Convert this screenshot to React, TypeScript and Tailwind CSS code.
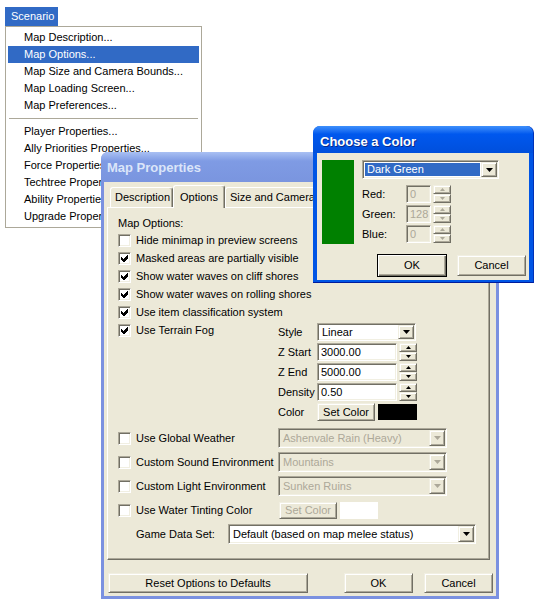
import React from "react";

// classic XP edge styles
const raised =
  "bg-[#ece9d8] border border-t-[#f1efe2] border-l-[#f1efe2] border-r-[#716f64] border-b-[#716f64] shadow-[inset_1px_1px_0_#fff,inset_-1px_-1px_0_#aca899]";
const sunken =
  "border border-t-[#aca899] border-l-[#aca899] border-r-white border-b-white shadow-[inset_1px_1px_0_#716f64,inset_-1px_-1px_0_#f1efe2]";

function Check({ on }: { on?: boolean }) {
  return (
    <span className={`flex h-[13px] w-[13px] shrink-0 items-center justify-center bg-white ${sunken}`}>
      {on && (
        <svg width="7" height="7" viewBox="0 0 7 7" shapeRendering="crispEdges">
          <polygon points="0,2 2,4 6,0 7,0 7,3 3,7 2,7 0,5" fill="#000" />
        </svg>
      )}
    </span>
  );
}

function CheckRow({ label, on }: { label: string; on?: boolean }) {
  return (
    <div className="flex h-[18px] items-center gap-[5px]">
      <Check on={on} />
      <span className="whitespace-nowrap">{label}</span>
    </div>
  );
}

function Arrow({ disabled }: { disabled?: boolean }) {
  return (
    <div className={`flex w-[16px] shrink-0 items-center justify-center ${raised}`}>
      <svg width="7" height="4" viewBox="0 0 7 4">
        <polygon points="0,0 7,0 3.5,4" fill={disabled ? "#aca899" : "#000"} />
      </svg>
    </div>
  );
}

function Combo({
  value,
  className,
  disabled,
  selected,
}: {
  value: string;
  className: string;
  disabled?: boolean;
  selected?: boolean;
}) {
  return (
    <div className={`flex p-[1px] ${sunken} ${disabled ? "bg-[#ece9d8]" : "bg-white"} ${className}`}>
      <div className="flex flex-1 items-center p-[1px]">
        <span
          className={`flex h-full flex-1 items-center whitespace-nowrap pl-[2px] ${
            selected ? "bg-[#316ac5] text-white" : disabled ? "text-[#aca899]" : ""
          }`}
        >
          {value}
        </span>
      </div>
      <Arrow disabled={disabled} />
    </div>
  );
}

function Field({ value, className, disabled }: { value: string; className: string; disabled?: boolean }) {
  return (
    <div
      className={`flex items-center pl-[3px] ${sunken} ${
        disabled ? "bg-[#ece9d8] text-[#aca899]" : "bg-white"
      } ${className}`}
    >
      {value}
    </div>
  );
}

function Spin({ disabled }: { disabled?: boolean }) {
  const c = disabled ? "#aca899" : "#000";
  return (
    <div className="flex h-[18px] w-[18px] flex-col">
      <div className={`flex flex-1 items-center justify-center ${raised}`}>
        <svg width="5" height="3" viewBox="0 0 5 3">
          <polygon points="2.5,0 5,3 0,3" fill={c} />
        </svg>
      </div>
      <div className={`flex flex-1 items-center justify-center ${raised}`}>
        <svg width="5" height="3" viewBox="0 0 5 3">
          <polygon points="0,0 5,0 2.5,3" fill={c} />
        </svg>
      </div>
    </div>
  );
}

function Btn({ children, className, disabled }: { children: React.ReactNode; className: string; disabled?: boolean }) {
  return (
    <div className={`flex items-center justify-center ${raised} ${disabled ? "text-[#aca899]" : ""} ${className}`}>
      {children}
    </div>
  );
}

const menuTop = ["Map Description...", "Map Options...", "Map Size and Camera Bounds...", "Map Loading Screen...", "Map Preferences..."];
const menuBottom = [
  "Player Properties...",
  "Ally Priorities Properties...",
  "Force Properties...",
  "Techtree Properties...",
  "Ability Properties...",
  "Upgrade Properties...",
];

export default function App() {
  return (
    <div className="relative h-[603px] w-[541px] overflow-hidden bg-white font-['Liberation_Sans',Arial,sans-serif] text-[11px] text-black">
      {/* Scenario menu */}
      <div className="absolute left-[5px] top-[7px] h-[19px] w-[53px] bg-[#316ac5] pl-[6px] leading-[19px] text-white">
        Scenario
      </div>
      <div className="absolute left-[5px] top-[26px] w-[197px] border border-[#aca899] bg-white p-[2px]">
        {menuTop.map((m) => (
          <div
            key={m}
            className={`h-[17px] pl-[16px] leading-[17px] ${m === "Map Options..." ? "bg-[#316ac5] text-white" : ""}`}
          >
            {m}
          </div>
        ))}
        <div className="flex h-[9px] items-center px-[1px]">
          <div className="h-[1px] w-full bg-[#aca899]" />
        </div>
        {menuBottom.map((m) => (
          <div key={m} className="h-[17px] pl-[16px] leading-[17px]">
            {m}
          </div>
        ))}
      </div>

      {/* Map Properties window (inactive) */}
      <div className="absolute left-[101px] top-[152px] flex h-[447px] w-[398px] flex-col rounded-t-[7px] bg-[#7b91e0]">
        <div className="flex h-[30px] items-center rounded-t-[7px] bg-linear-to-b from-[#a9c0f3] via-[#7f9be4] via-30% to-[#7a95df] pl-[6px] pt-[1px] text-[13px] font-bold text-[#dbe5f9]">
          Map Properties
        </div>
        <div className="mx-[3px] mb-[3px] flex flex-1 flex-col bg-[#ece9d8]">
          <div className="ml-[3px] mr-[6px] mt-[3px]">
            {/* tabs */}
            <div className="flex h-[22px] items-end pl-[3px]">
              <div className="flex h-[20px] w-[63px] items-center justify-center rounded-t-[3px] border border-b-0 border-t-white border-l-white border-r-[#716f64] pl-[2px] shadow-[inset_-1px_0_0_#aca899]">
                Description
              </div>
              <div className="relative z-10 -mb-[1px] flex h-[23px] w-[52px] items-start justify-center rounded-t-[3px] border border-b-0 border-t-white border-l-white border-r-[#716f64] bg-[#ece9d8] pt-[3px] shadow-[inset_-1px_0_0_#aca899]">
                Options
              </div>
              <div className="flex h-[20px] w-[150px] items-center whitespace-nowrap rounded-t-[3px] border border-b-0 border-t-white border-l-white border-r-[#716f64] pl-[4px] shadow-[inset_-1px_0_0_#aca899]">
                Size and Camera Bounds
              </div>
            </div>

            {/* panel */}
            <div className="h-[353px] border border-t-white border-l-white border-r-[#716f64] border-b-[#716f64] pl-[10px] pt-[7px] shadow-[inset_-1px_-1px_0_#aca899]">
              <div className="h-[16px] leading-[16px]">Map Options:</div>
              <CheckRow label="Hide minimap in preview screens" />
              <CheckRow on label="Masked areas are partially visible" />
              <CheckRow on label="Show water waves on cliff shores" />
              <CheckRow on label="Show water waves on rolling shores" />
              <CheckRow on label="Use item classification system" />

              <div className="flex">
                <div className="w-[160px]">
                  <CheckRow on label="Use Terrain Fog" />
                </div>
                <div className="mt-[2px] grid auto-rows-[18px] grid-cols-[39px_auto] items-center gap-y-[2px]">
                  <span>Style</span>
                  <Combo value="Linear" className="h-[18px] w-[99px]" />
                  <span className="whitespace-nowrap">Z Start</span>
                  <div className="flex gap-[2px]">
                    <Field value="3000.00" className="h-[18px] w-[80px]" />
                    <Spin />
                  </div>
                  <span>Z End</span>
                  <div className="flex gap-[2px]">
                    <Field value="5000.00" className="h-[18px] w-[80px]" />
                    <Spin />
                  </div>
                  <span>Density</span>
                  <div className="flex gap-[2px]">
                    <Field value="0.50" className="h-[18px] w-[80px]" />
                    <Spin />
                  </div>
                  <span>Color</span>
                  <div className="flex items-center gap-[3px]">
                    <Btn className="h-[18px] w-[58px]">Set Color</Btn>
                    <div className="h-[16px] w-[39px] bg-black" />
                  </div>
                </div>
              </div>

              <div className="mt-[7px] flex flex-col gap-[4px]">
                <div className="flex h-[20px] items-center">
                  <div className="w-[160px]">
                    <CheckRow label="Use Global Weather" />
                  </div>
                  <Combo disabled value="Ashenvale Rain (Heavy)" className="h-[20px] w-[169px]" />
                </div>
                <div className="flex h-[20px] items-center">
                  <div className="w-[160px]">
                    <CheckRow label="Custom Sound Environment" />
                  </div>
                  <Combo disabled value="Mountains" className="h-[20px] w-[169px]" />
                </div>
                <div className="flex h-[20px] items-center">
                  <div className="w-[160px]">
                    <CheckRow label="Custom Light Environment" />
                  </div>
                  <Combo disabled value="Sunken Ruins" className="h-[20px] w-[169px]" />
                </div>
                <div className="flex h-[20px] items-center">
                  <div className="w-[160px]">
                    <CheckRow label="Use Water Tinting Color" />
                  </div>
                  <div className="ml-[1px] flex items-center gap-[3px]">
                    <Btn disabled className="h-[17px] w-[58px]">
                      Set Color
                    </Btn>
                    <div className="h-[17px] w-[38px] bg-white" />
                  </div>
                </div>
                <div className="flex h-[20px] items-center pl-[18px]">
                  <span className="w-[92px]">Game Data Set:</span>
                  <Combo value="Default (based on map melee status)" className="h-[20px] w-[248px]" />
                </div>
              </div>
            </div>
          </div>

          {/* bottom buttons */}
          <div className="mt-[13px] flex pl-[4px] pr-[3px]">
            <Btn className="h-[20px] w-[200px]">Reset Options to Defaults</Btn>
            <Btn className="ml-auto h-[20px] w-[69px]">OK</Btn>
            <Btn className="ml-[11px] h-[20px] w-[69px]">Cancel</Btn>
          </div>
        </div>
      </div>

      {/* Choose a Color dialog (active) */}
      <div className="absolute left-[313px] top-[126px] flex h-[157px] w-[221px] flex-col rounded-t-[7px] border-b border-r border-b-[#001c9c] border-r-[#0032b8] bg-[#0055e5]">
        <div className="flex h-[27px] items-center rounded-t-[7px] bg-linear-to-b from-[#3e90fb] via-[#0058ee] via-30% to-[#004fdc] pl-[7px] pt-[4px] text-[13px] font-bold text-white [text-shadow:1px_1px_0_#0a2a8a]">
          Choose a Color
        </div>
        <div className="mx-[4px] mb-[2px] flex-1 bg-[#ece9d8] pl-[5px] pt-[7px]">
          <div className="flex">
            <div className="h-[84px] w-[32px] bg-[#008000]" />
            <div className="ml-[8px]">
              <Combo selected value="Dark Green" className="h-[19px] w-[137px]" />
              <div className="mt-[6px] grid auto-rows-[18px] grid-cols-[44px_auto] items-center gap-y-[2px]">
                <span>Red:</span>
                <div className="flex gap-[2px]">
                  <Field disabled value="0" className="h-[18px] w-[25px]" />
                  <Spin disabled />
                </div>
                <span>Green:</span>
                <div className="flex gap-[2px]">
                  <Field disabled value="128" className="h-[18px] w-[25px]" />
                  <Spin disabled />
                </div>
                <span>Blue:</span>
                <div className="flex gap-[2px]">
                  <Field disabled value="0" className="h-[18px] w-[25px]" />
                  <Spin disabled />
                </div>
              </div>
            </div>
          </div>
          <div className="mt-[10px] flex items-center justify-end gap-[10px] pr-[3px]">
            <div className="flex h-[23px] w-[70px] items-center justify-center border border-black bg-[#ece9d8] shadow-[inset_1px_1px_0_#fff,inset_-1px_-1px_0_#716f64,inset_-2px_-2px_0_#aca899]">
              OK
            </div>
            <Btn className="h-[21px] w-[69px]">Cancel</Btn>
          </div>
        </div>
      </div>
    </div>
  );
}
